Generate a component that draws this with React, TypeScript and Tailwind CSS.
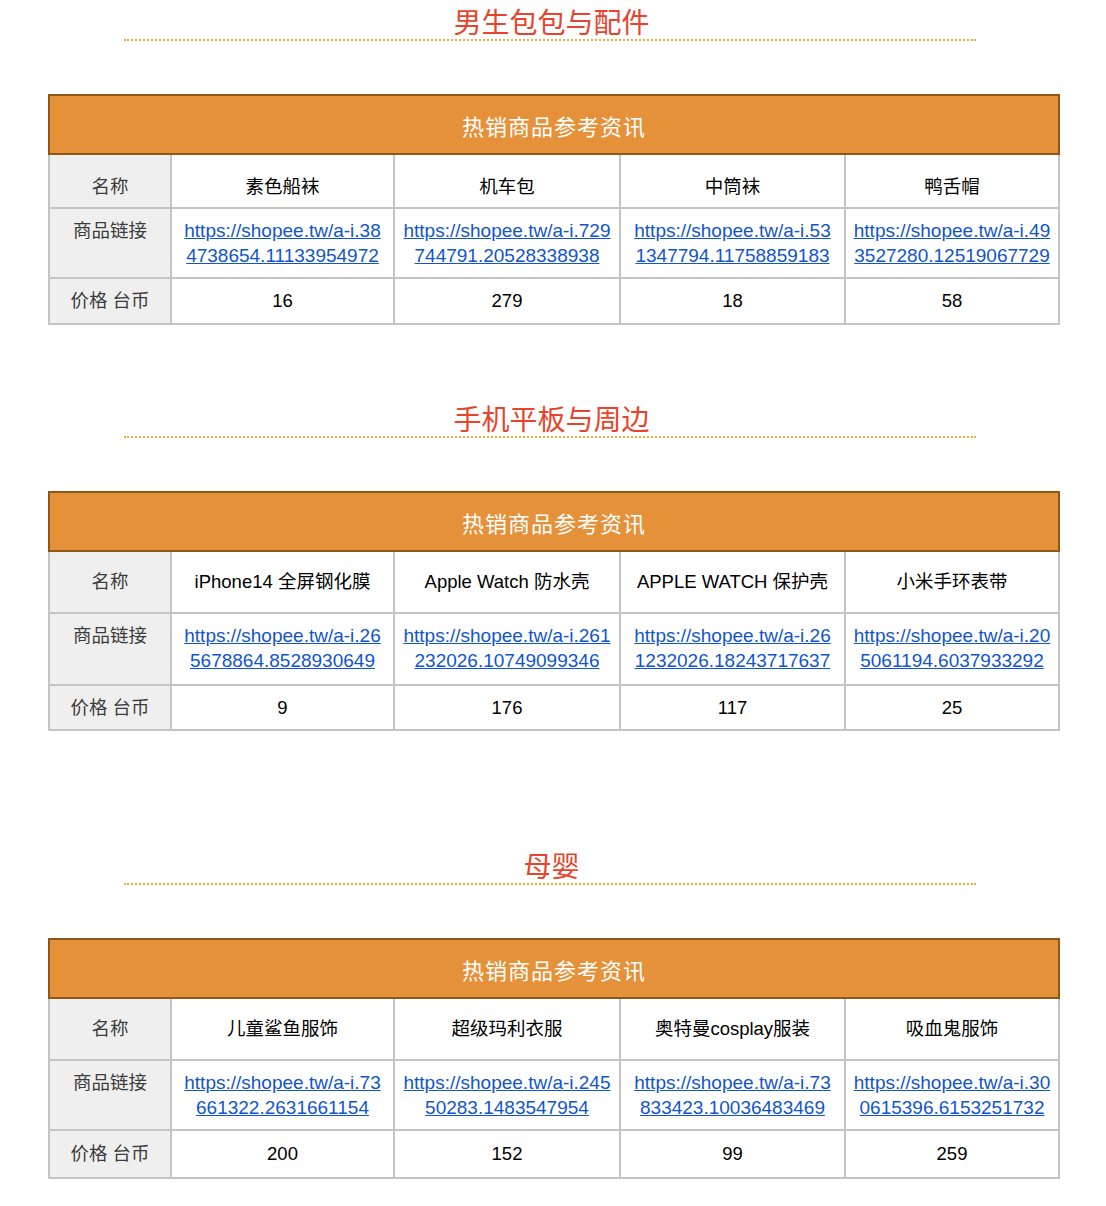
const sections = [
  {
    title: "男生包包与配件",
    gapTop: "pt-[3px]",
    rows: ["h-[52px] pt-[12px]", "h-[68px]", "h-[44px]"],
    items: [
      { name: "素色船袜", link: ["https://shopee.tw/a-i.38", "4738654.11133954972"], price: "16" },
      { name: "机车包", link: ["https://shopee.tw/a-i.729", "744791.20528338938"], price: "279" },
      { name: "中筒袜", link: ["https://shopee.tw/a-i.53", "1347794.11758859183"], price: "18" },
      { name: "鸭舌帽", link: ["https://shopee.tw/a-i.49", "3527280.12519067729"], price: "58" },
    ],
  },
  {
    title: "手机平板与周边",
    gapTop: "pt-[75px]",
    rows: ["h-[60px]", "h-[70px]", "h-[43px]"],
    items: [
      { name: "iPhone14 全屏钢化膜", link: ["https://shopee.tw/a-i.26", "5678864.8528930649"], price: "9" },
      { name: "Apple Watch 防水壳", link: ["https://shopee.tw/a-i.261", "232026.10749099346"], price: "176" },
      { name: "APPLE WATCH 保护壳", link: ["https://shopee.tw/a-i.26", "1232026.18243717637"], price: "117" },
      { name: "小米手环表带", link: ["https://shopee.tw/a-i.20", "5061194.6037933292"], price: "25" },
    ],
  },
  {
    title: "母婴",
    gapTop: "pt-[116px]",
    rows: ["h-[60px]", "h-[68px]", "h-[46px]"],
    items: [
      { name: "儿童鲨鱼服饰", link: ["https://shopee.tw/a-i.73", "661322.2631661154"], price: "200" },
      { name: "超级玛利衣服", link: ["https://shopee.tw/a-i.245", "50283.1483547954"], price: "152" },
      { name: "奥特曼cosplay服装", link: ["https://shopee.tw/a-i.73", "833423.10036483469"], price: "99" },
      { name: "吸血鬼服饰", link: ["https://shopee.tw/a-i.30", "0615396.6153251732"], price: "259" },
    ],
  },
];

function Section({ s }: { s: (typeof sections)[number] }) {
  const [nameRow, linkRow, priceRow] = s.rows;
  return (
    <section className={s.gapTop}>
      {/* Title */}
      <h2 className="ml-[-3px] h-[36px] pt-[6px] text-center text-[28px] leading-[30px] text-[#e8442b]">{s.title}</h2>
      <div className="ml-[124px] w-[852px] border-t-2 border-dotted border-[#f2a93b]" />

      {/* Table */}
      <div className="ml-[48px] mt-[53px] w-[1012px]">
        <div className="flex h-[61px] items-center justify-center border-2 border-[#8d5816] bg-[#e5913a] pt-[5px] text-[22px] tracking-[1px] text-white">
          热销商品参考资讯
        </div>
        <div className="grid grid-cols-[120px_221px_224px_223px_212px] gap-[2px] bg-[#c4c4c4] px-[2px] pb-[2px] text-[18.5px]">
          <div className={`flex items-center justify-center bg-[#efefef] text-[#3c3c3c] ${nameRow}`}>名称</div>
          {s.items.map((it) => (
            <div key={it.name} className={`flex items-center justify-center bg-white text-black ${nameRow}`}>
              {it.name}
            </div>
          ))}

          <div className={`bg-[#efefef] pt-[9px] text-center leading-[25px] text-[#3c3c3c] ${linkRow}`}>商品链接</div>
          {s.items.map((it) => (
            <div key={it.link[1]} className={`bg-white pt-[9px] text-center text-[19px] leading-[25px] ${linkRow}`}>
              <a href="#" className="text-[#1155cc] underline">
                {it.link[0]}
                <br />
                {it.link[1]}
              </a>
            </div>
          ))}

          <div className={`flex items-center justify-center bg-[#efefef] text-[#3c3c3c] ${priceRow}`}>价格 台币</div>
          {s.items.map((it) => (
            <div key={it.price + it.name} className={`flex items-center justify-center bg-white text-black ${priceRow}`}>
              {it.price}
            </div>
          ))}
        </div>
      </div>
    </section>
  );
}

export default function App() {
  return (
    <div className="min-h-[1206px] w-[1106px] bg-white font-['Liberation_Sans','Noto_Sans_CJK_SC',sans-serif]">
      {sections.map((s) => (
        <Section key={s.title} s={s} />
      ))}
    </div>
  );
}
